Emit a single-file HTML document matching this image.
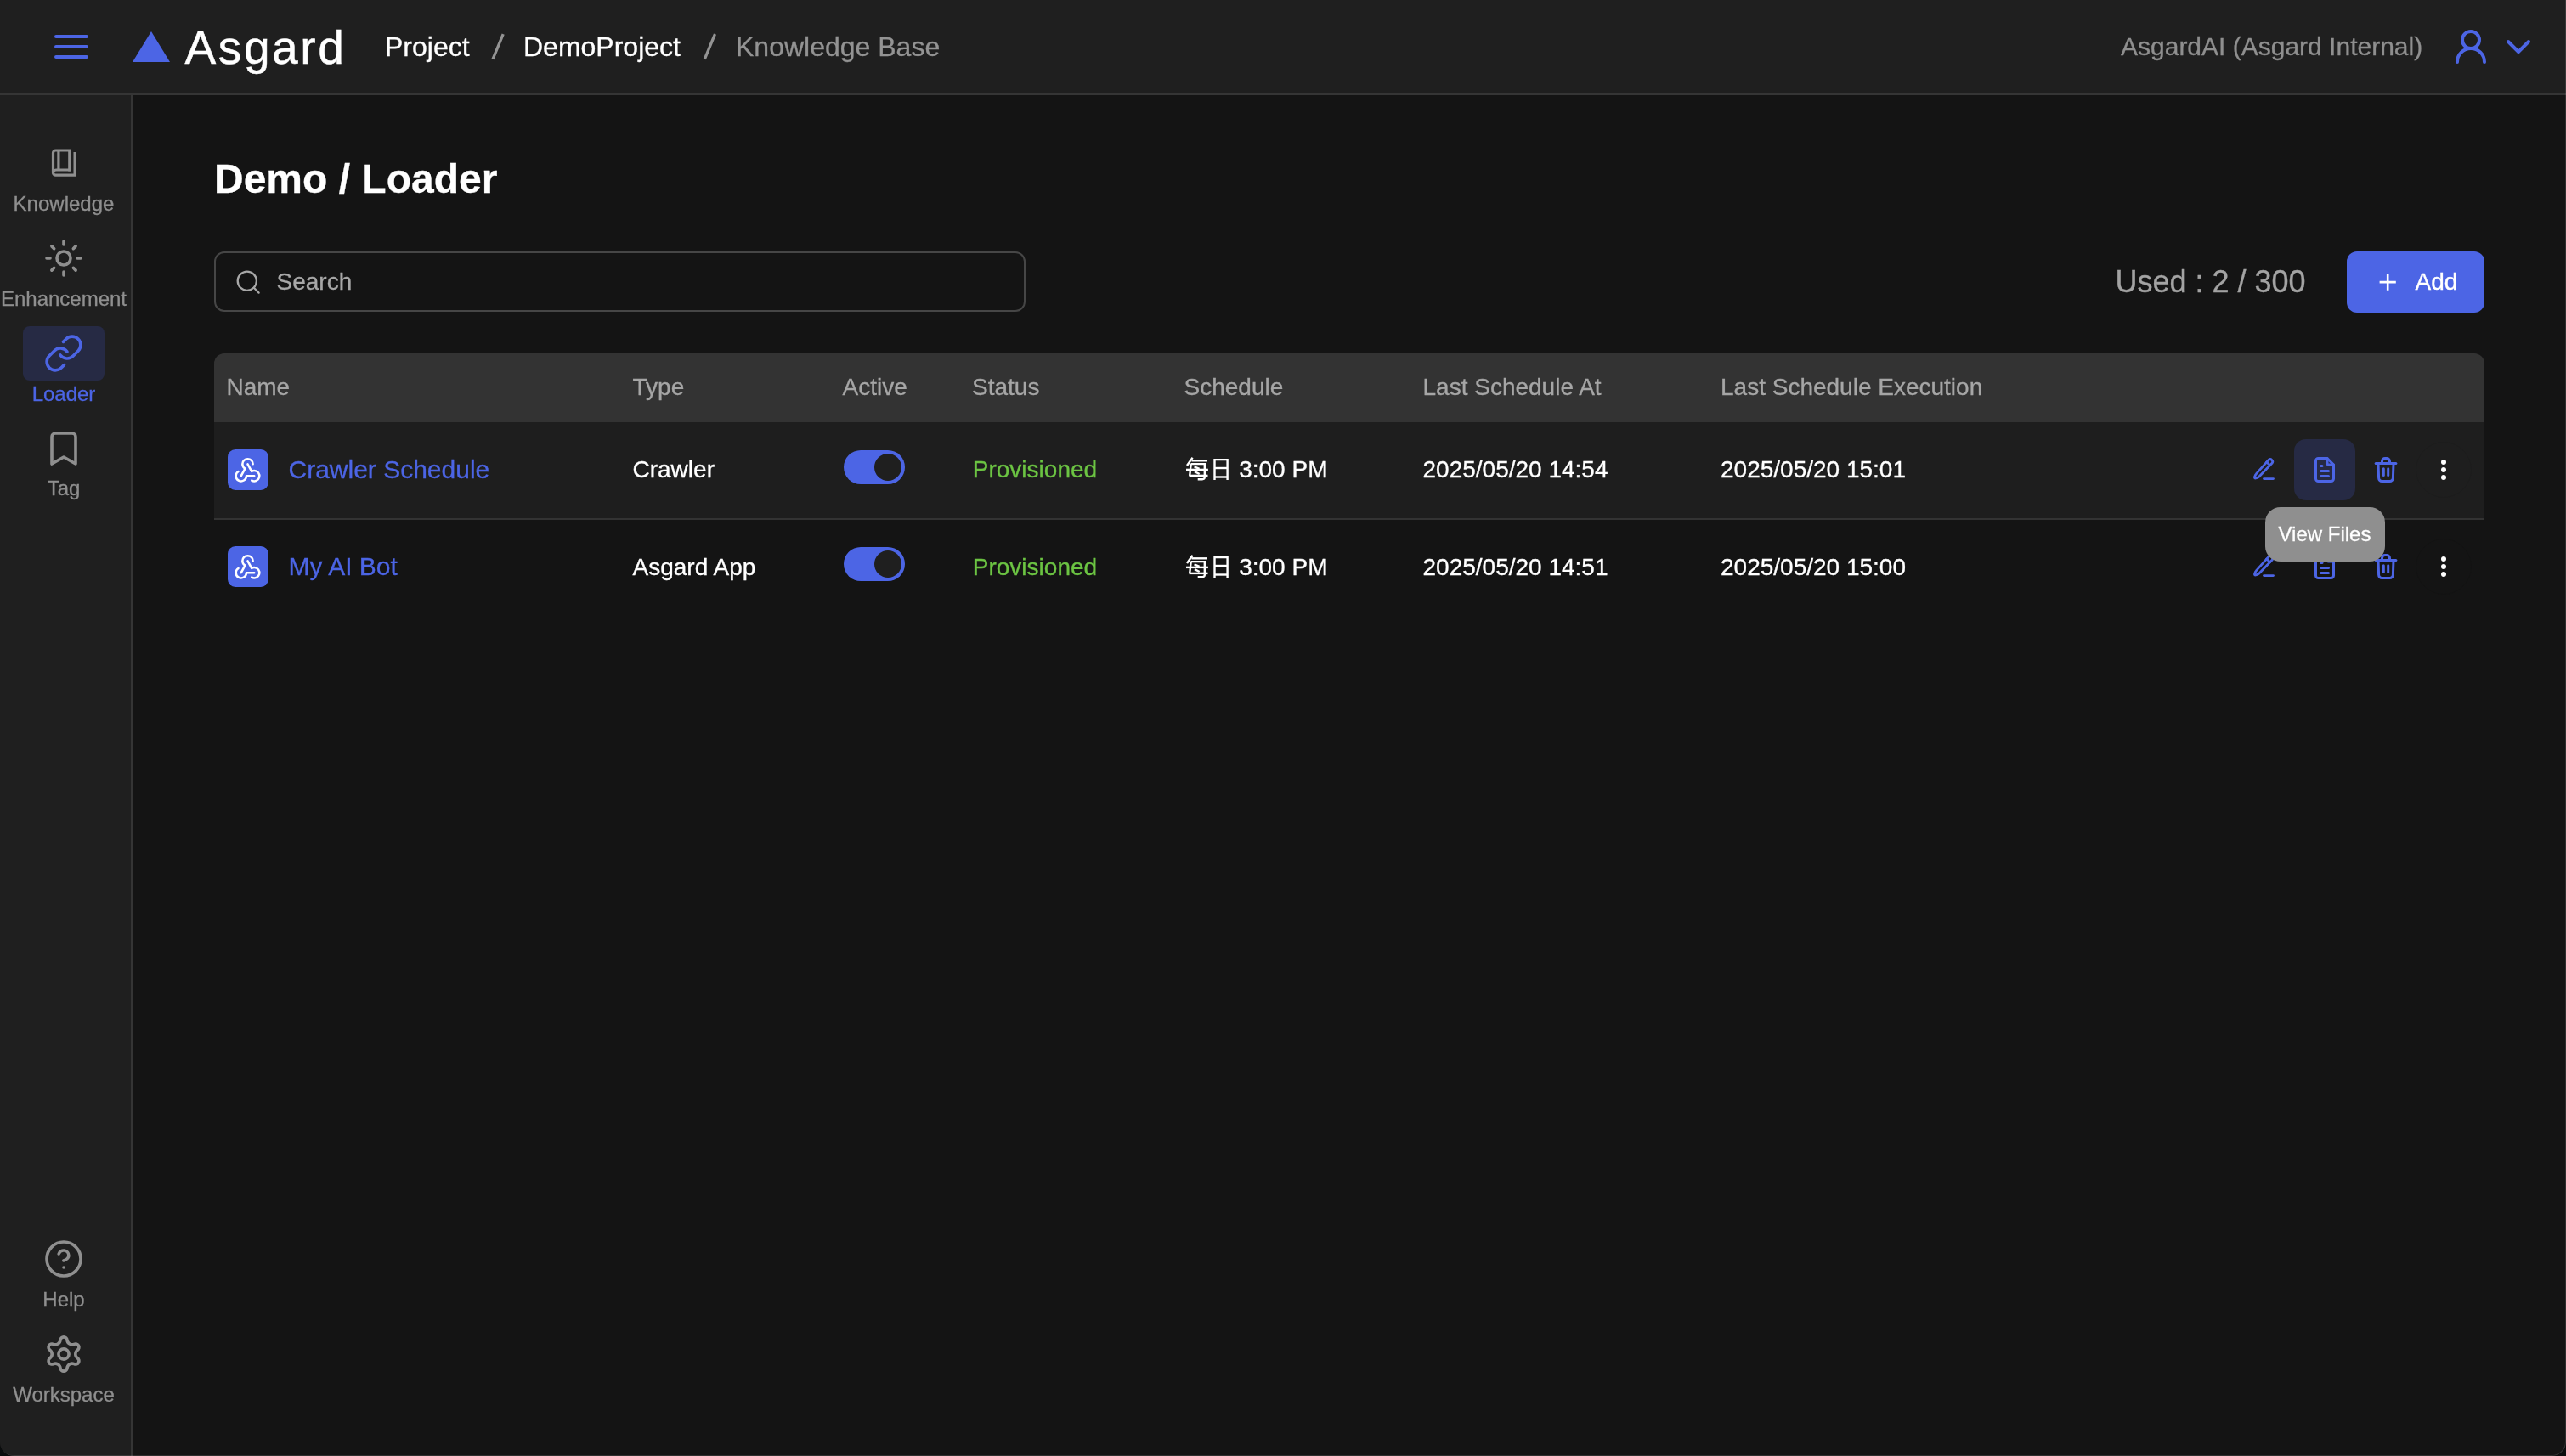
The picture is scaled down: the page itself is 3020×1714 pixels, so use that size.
<!DOCTYPE html>
<html><head><meta charset="utf-8">
<style>
*{margin:0;padding:0;box-sizing:border-box}
html,body{width:3020px;height:1714px;overflow:hidden;background:#0b0d0e}
body{font-family:"Liberation Sans",sans-serif;position:relative}
#win{position:absolute;left:0;top:0;width:3020px;height:1714px;background:#141414;will-change:transform;border-radius:0 0 16px 16px;overflow:hidden}
#frame{position:absolute;left:0;top:0;width:3020px;height:1714px;border-radius:0 0 16px 16px;box-shadow:inset -1px -1px 0 rgba(255,255,255,0.12);pointer-events:none}
.a{position:absolute;white-space:nowrap;line-height:1;-webkit-text-stroke:0.3px currentColor}
svg{position:absolute;overflow:visible}
</style></head>
<body><div id="win">
<div class="a" style="left:0px;top:0px;width:3020px;height:110px;background:#1f1f1f"></div>
<div class="a" style="left:0px;top:110px;width:3020px;height:2px;background:#353535"></div>
<div class="a" style="left:0px;top:112px;width:154px;height:1602px;background:#1f1f1f"></div>
<div class="a" style="left:154px;top:112px;width:2px;height:1602px;background:#353535"></div>
<div class="a" style="left:64px;top:41px;width:40px;height:4px;background:#4c65e5;border-radius:2px"></div>
<div class="a" style="left:64px;top:53px;width:40px;height:4px;background:#4c65e5;border-radius:2px"></div>
<div class="a" style="left:64px;top:65px;width:40px;height:4px;background:#4c65e5;border-radius:2px"></div>
<svg style="left:156px;top:37px" width="44" height="36" viewBox="0 0 44 36" fill="#4c65e5" stroke="none" stroke-width="0" stroke-linecap="round" stroke-linejoin="round" ><polygon points="22,0 44,36 0,36"/></svg>
<div class="a" style="left:217.5px;top:28.84px;font-size:55px;color:#fff;font-weight:normal;letter-spacing:2.6px;-webkit-text-stroke:0.5px #fff">Asgard</div>
<div class="a" style="left:453.0px;top:39.21px;font-size:32px;color:#fff;font-weight:normal;">Project</div>
<svg style="left:570px;top:35px" width="30" height="40" viewBox="570 35 30 40" fill="none" stroke="#939393" stroke-width="3.3" stroke-linejoin="round" stroke-linecap="butt"><path d="M580 69.7L592.2 40.2M829.3 69.7L841.5 40.2"/></svg>
<div class="a" style="left:616.0px;top:39.21px;font-size:32px;color:#fff;font-weight:normal;">DemoProject</div>
<div class="a" style="left:866.0px;top:39.21px;font-size:32px;color:#939393;font-weight:normal;">Knowledge Base</div>
<div class="a" style="left:2496.0px;top:39.61px;font-size:30px;color:#8f8f8f;font-weight:normal;">AsgardAI (Asgard Internal)</div>
<svg style="left:2888px;top:33px" width="40" height="44" viewBox="0 0 40 44" fill="none" stroke="#4c65e5" stroke-width="4" stroke-linecap="round" stroke-linejoin="round" ><circle cx="20" cy="14" r="10"/><path d="M4 40a16 16 0 0 1 32 0"/></svg>
<svg style="left:2948px;top:45px" width="32" height="20" viewBox="0 0 32 20" fill="none" stroke="#4c65e5" stroke-width="4" stroke-linecap="round" stroke-linejoin="round" ><path d="M4 4l12 12l12 -12"/></svg>
<svg style="left:51px;top:168px" width="48" height="48" viewBox="51 168 48 48" fill="none" stroke="#8f8f8f" stroke-width="3.2" stroke-linecap="butt" stroke-linejoin="miter"><path d="M81.8 201.6V177H65.5a3 3 0 0 0 -3 3V203.2a3 3 0 0 0 3 3H88.1V178.9"/><path d="M62.5 204a3.5 3.5 0 0 1 3.5 -4H83.4"/><path d="M68.9 177V200"/></svg>
<div class="a" style="left:0.0px;width:150px;text-align:center;top:228.48px;font-size:24px;color:#8f8f8f;">Knowledge</div>
<svg style="left:51px;top:279.5px" width="48" height="48" viewBox="0 0 24 24" fill="none" stroke="#8f8f8f" stroke-width="1.8" stroke-linecap="round" stroke-linejoin="round" ><circle cx="12" cy="12" r="4"/><path d="M12 2v2"/><path d="M12 20v2"/><path d="m4.93 4.93 1.41 1.41"/><path d="m17.66 17.66 1.41 1.41"/><path d="M2 12h2"/><path d="M20 12h2"/><path d="m6.34 17.66-1.41 1.41"/><path d="m19.07 4.93-1.41 1.41"/></svg>
<div class="a" style="left:0.0px;width:150px;text-align:center;top:340.48px;font-size:24px;color:#8f8f8f;">Enhancement</div>
<div class="a" style="left:27px;top:384px;width:96px;height:64px;background:#262a44;border-radius:8px"></div>
<svg style="left:51px;top:392px" width="48" height="48" viewBox="0 0 24 24" fill="none" stroke="#4c65e5" stroke-width="1.8" stroke-linecap="round" stroke-linejoin="round" ><path d="M10 13a5 5 0 0 0 7.54.54l3-3a5 5 0 0 0-7.07-7.07l-1.72 1.71"/><path d="M14 11a5 5 0 0 0-7.54-.54l-3 3a5 5 0 0 0 7.07 7.07l1.71-1.71"/></svg>
<div class="a" style="left:0.0px;width:150px;text-align:center;top:452.48px;font-size:24px;color:#4c65e5;">Loader</div>
<svg style="left:51px;top:504px" width="48" height="48" viewBox="0 0 24 24" fill="none" stroke="#8f8f8f" stroke-width="1.8" stroke-linecap="round" stroke-linejoin="round" ><path d="m19 21-7-4-7 4V5a2 2 0 0 1 2-2h10a2 2 0 0 1 2 2v16z"/></svg>
<div class="a" style="left:0.0px;width:150px;text-align:center;top:563.48px;font-size:24px;color:#8f8f8f;">Tag</div>
<svg style="left:51px;top:1458px" width="48" height="48" viewBox="0 0 24 24" fill="none" stroke="#8f8f8f" stroke-width="1.8" stroke-linecap="round" stroke-linejoin="round" ><circle cx="12" cy="12" r="10"/><path d="M9.09 9a3 3 0 0 1 5.83 1c0 2-3 3-3 3"/><path d="M12 17h.01"/></svg>
<div class="a" style="left:0.0px;width:150px;text-align:center;top:1518.48px;font-size:24px;color:#8f8f8f;">Help</div>
<svg style="left:51px;top:1570px" width="48" height="48" viewBox="0 0 48 48" fill="none" stroke="#8f8f8f" stroke-width="3.6" stroke-linecap="round" stroke-linejoin="round" ><path d="M20.019 7.514A4.000 4.000 0 0 1 27.981 7.514A5.892 5.892 0 0 0 36.286 12.309A4.000 4.000 0 0 1 40.268 19.205A5.892 5.892 0 0 0 40.268 28.795A4.000 4.000 0 0 1 36.286 35.691A5.892 5.892 0 0 0 27.981 40.486A4.000 4.000 0 0 1 20.019 40.486A5.892 5.892 0 0 0 11.714 35.691A4.000 4.000 0 0 1 7.732 28.795A5.892 5.892 0 0 0 7.732 19.205A4.000 4.000 0 0 1 11.714 12.309A5.892 5.892 0 0 0 20.019 7.514Z"/><circle cx="24" cy="24" r="6.1"/></svg>
<div class="a" style="left:0.0px;width:150px;text-align:center;top:1630.48px;font-size:24px;color:#8f8f8f;">Workspace</div>
<div class="a" style="left:252.0px;top:187.37px;font-size:48px;color:#fff;font-weight:bold;">Demo / Loader</div>
<div class="a" style="left:252px;top:296px;width:955px;height:71px;border:2px solid #464646;border-radius:12px"></div>
<svg style="left:276px;top:316px" width="32" height="32" viewBox="276 316 32 32" fill="none" stroke="#a8a8a8" stroke-width="2.3" stroke-linecap="round" stroke-linejoin="round" ><circle cx="290.8" cy="330.7" r="11.1"/><path d="M299.3 339.3L304.6 344.6"/></svg>
<div class="a" style="left:325.5px;top:317.50px;font-size:28px;color:#a8a8a8;font-weight:normal;">Search</div>
<div class="a" style="left:2489.5px;top:314.03px;font-size:36px;color:#a3a3a3;font-weight:normal;">Used : 2 / 300</div>
<div class="a" style="left:2762px;top:296px;width:162px;height:72px;background:#4c65e5;border-radius:12px"></div>
<svg style="left:2796px;top:318px" width="28" height="28" viewBox="2796 318 28 28" fill="none" stroke="#fff" stroke-width="2.6" stroke-linejoin="round" stroke-linecap="butt"><path d="M2810.2 322.5V341.7M2800.6 332.1H2819.8"/></svg>
<div class="a" style="left:2842.5px;top:317.50px;font-size:28px;color:#fff;font-weight:normal;">Add</div>
<div class="a" style="left:252px;top:416px;width:2672px;height:81px;background:#333;border-radius:12px 12px 0 0"></div>
<div class="a" style="left:252px;top:497px;width:2672px;height:113px;background:#1e1e1e"></div>
<div class="a" style="left:252px;top:610px;width:2672px;height:2px;background:#333"></div>
<div class="a" style="left:266.5px;top:441.60px;font-size:28px;color:#a6a6a6;font-weight:normal;">Name</div>
<div class="a" style="left:744.5px;top:441.60px;font-size:28px;color:#a6a6a6;font-weight:normal;">Type</div>
<div class="a" style="left:991.5px;top:441.60px;font-size:28px;color:#a6a6a6;font-weight:normal;">Active</div>
<div class="a" style="left:1144.0px;top:441.60px;font-size:28px;color:#a6a6a6;font-weight:normal;">Status</div>
<div class="a" style="left:1393.5px;top:441.60px;font-size:28px;color:#a6a6a6;font-weight:normal;">Schedule</div>
<div class="a" style="left:1674.5px;top:441.60px;font-size:28px;color:#a6a6a6;font-weight:normal;">Last Schedule At</div>
<div class="a" style="left:2025.0px;top:441.60px;font-size:28px;color:#a6a6a6;font-weight:normal;">Last Schedule Execution</div>
<div class="a" style="left:268px;top:529px;width:48px;height:48px;background:#4c65e5;border-radius:9px"></div>
<svg style="left:273.4px;top:534.2px" width="37" height="37" viewBox="0 0 24 24" fill="none" stroke="#fff" stroke-width="1.65" stroke-linecap="round" stroke-linejoin="round" ><path d="M4.876 13.61a4 4 0 1 0 6.124 3.39h6"/><path d="M15.066 20.502a4 4 0 1 0 1.934 -7.502c-.706 0 -1.424 .179 -2 .5l-3 -5.5"/><path d="M16 8a4 4 0 1 0 -8 0c0 1.506 .77 2.818 2 3.5l-3 5.5"/></svg>
<div class="a" style="left:339.5px;top:537.61px;font-size:30px;color:#4c65e5;font-weight:normal;">Crawler Schedule</div>
<div class="a" style="left:744.5px;top:539.30px;font-size:28px;color:#fff;font-weight:normal;">Crawler</div>
<div class="a" style="left:993px;top:530px;width:72px;height:40px;background:#4c65e5;border-radius:20px"></div>
<div class="a" style="left:1029px;top:534px;width:32px;height:32px;background:#1f1f1f;border-radius:50%"></div>
<div class="a" style="left:1144.8px;top:539.30px;font-size:28px;color:#6cc443;font-weight:normal;">Provisioned</div>
<svg style="left:1390px;top:533px" width="60" height="36" viewBox="1390 533 60 36" fill="none" stroke="#fff" stroke-width="2.4" stroke-linecap="butt" stroke-linejoin="miter"><path d="M1403.6 538.8L1397 548"/><path d="M1402.5 542.3H1421"/><path d="M1401.5 546.1H1417.8V562Q1417.6 564.2 1415 564.2H1409.7"/><path d="M1401.7 546.1L1400.2 560"/><path d="M1396 552.9H1421.9"/><path d="M1399.5 559.9H1421.5"/><path d="M1405.6 549.4L1411.6 551.9"/><path d="M1406 555.1L1411.7 558"/><path d="M1429.5 565V541.1H1444.6V565"/><path d="M1429.5 551H1444.6"/><path d="M1429.5 561.5H1444.6"/></svg>
<div class="a" style="left:1458.2px;top:539.30px;font-size:28px;color:#fff;font-weight:normal;">3:00 PM</div>
<div class="a" style="left:1674.5px;top:539.30px;font-size:28px;color:#fff;font-weight:normal;">2025/05/20 14:54</div>
<div class="a" style="left:2025.0px;top:539.30px;font-size:28px;color:#fff;font-weight:normal;">2025/05/20 15:01</div>
<svg style="left:2650px;top:539px" width="28" height="28" viewBox="0 0 28 28" fill="none" stroke="#4c65e5" stroke-width="2.8" stroke-linecap="round" stroke-linejoin="round" ><path d="M20.0 2.35A2.8 2.8 0 0 1 24.0 6.25L8.6 22.2Q7.6 23.2 6 23.6L4.6 24A0.9 0.9 0 0 1 3.5 22.9L3.9 21.5Q4.3 19.9 5.3 18.9Z"/><path d="M21.56 8.76L17.56 4.86"/><path d="M14.5 24.6H25.5"/></svg>
<div class="a" style="left:2700px;top:517px;width:72px;height:72px;background:#262a44;border-radius:14px"></div>
<div class="a" style="left:2843px;top:520px;width:66px;height:66px;border:1px solid rgba(0,0,0,0.07);border-radius:50%"></div>
<svg style="left:2718px;top:535px" width="36" height="36" viewBox="0 0 24 24" fill="none" stroke="#4c65e5" stroke-width="2" stroke-linecap="round" stroke-linejoin="round" ><path d="M14 3v4a1 1 0 0 0 1 1h4"/><path d="M17 21h-10a2 2 0 0 1 -2 -2v-14a2 2 0 0 1 2 -2h7l5 5v11a2 2 0 0 1 -2 2z"/><path d="M9 9l1 0"/><path d="M9 13l6 0"/><path d="M9 17l6 0"/></svg>
<svg style="left:2790px;top:535px" width="36" height="36" viewBox="0 0 24 24" fill="none" stroke="#4c65e5" stroke-width="2" stroke-linecap="round" stroke-linejoin="round" ><path d="M4.1 7H19.9"/><path d="M10.2 11.2V16.3"/><path d="M13.8 11.2V16.3"/><path d="M6 7l.4 11.5a2.5 2.5 0 0 0 2.5 2.5h6.2a2.5 2.5 0 0 0 2.5 -2.5L18 7"/><path d="M9 7V5.3a2.3 2.3 0 0 1 2.3 -2.3h1.4a2.3 2.3 0 0 1 2.3 2.3V7"/></svg>
<div class="a" style="left:2873px;top:540.7px;width:6px;height:6px;background:#fff;border-radius:50%"></div>
<div class="a" style="left:2873px;top:550px;width:6px;height:6px;background:#fff;border-radius:50%"></div>
<div class="a" style="left:2873px;top:559.3px;width:6px;height:6px;background:#fff;border-radius:50%"></div>
<div class="a" style="left:2843px;top:634px;width:66px;height:66px;border:1px solid rgba(0,0,0,0.07);border-radius:50%"></div>
<svg style="left:2718px;top:649px" width="36" height="36" viewBox="0 0 24 24" fill="none" stroke="#4c65e5" stroke-width="2" stroke-linecap="round" stroke-linejoin="round" ><path d="M14 3v4a1 1 0 0 0 1 1h4"/><path d="M17 21h-10a2 2 0 0 1 -2 -2v-14a2 2 0 0 1 2 -2h7l5 5v11a2 2 0 0 1 -2 2z"/><path d="M9 9l1 0"/><path d="M9 13l6 0"/><path d="M9 17l6 0"/></svg>
<svg style="left:2790px;top:649px" width="36" height="36" viewBox="0 0 24 24" fill="none" stroke="#4c65e5" stroke-width="2" stroke-linecap="round" stroke-linejoin="round" ><path d="M4.1 7H19.9"/><path d="M10.2 11.2V16.3"/><path d="M13.8 11.2V16.3"/><path d="M6 7l.4 11.5a2.5 2.5 0 0 0 2.5 2.5h6.2a2.5 2.5 0 0 0 2.5 -2.5L18 7"/><path d="M9 7V5.3a2.3 2.3 0 0 1 2.3 -2.3h1.4a2.3 2.3 0 0 1 2.3 2.3V7"/></svg>
<div class="a" style="left:2873px;top:654.7px;width:6px;height:6px;background:#fff;border-radius:50%"></div>
<div class="a" style="left:2873px;top:664px;width:6px;height:6px;background:#fff;border-radius:50%"></div>
<div class="a" style="left:2873px;top:673.3px;width:6px;height:6px;background:#fff;border-radius:50%"></div>
<div class="a" style="left:268px;top:643px;width:48px;height:48px;background:#4c65e5;border-radius:9px"></div>
<svg style="left:273.4px;top:648.2px" width="37" height="37" viewBox="0 0 24 24" fill="none" stroke="#fff" stroke-width="1.65" stroke-linecap="round" stroke-linejoin="round" ><path d="M4.876 13.61a4 4 0 1 0 6.124 3.39h6"/><path d="M15.066 20.502a4 4 0 1 0 1.934 -7.502c-.706 0 -1.424 .179 -2 .5l-3 -5.5"/><path d="M16 8a4 4 0 1 0 -8 0c0 1.506 .77 2.818 2 3.5l-3 5.5"/></svg>
<div class="a" style="left:339.5px;top:652.11px;font-size:30px;color:#4c65e5;font-weight:normal;">My AI Bot</div>
<div class="a" style="left:744.5px;top:653.80px;font-size:28px;color:#fff;font-weight:normal;">Asgard App</div>
<div class="a" style="left:993px;top:644px;width:72px;height:40px;background:#4c65e5;border-radius:20px"></div>
<div class="a" style="left:1029px;top:648px;width:32px;height:32px;background:#1f1f1f;border-radius:50%"></div>
<div class="a" style="left:1144.8px;top:653.80px;font-size:28px;color:#6cc443;font-weight:normal;">Provisioned</div>
<svg style="left:1390px;top:647.5px" width="60" height="36" viewBox="1390 533 60 36" fill="none" stroke="#fff" stroke-width="2.4" stroke-linecap="butt" stroke-linejoin="miter"><path d="M1403.6 538.8L1397 548"/><path d="M1402.5 542.3H1421"/><path d="M1401.5 546.1H1417.8V562Q1417.6 564.2 1415 564.2H1409.7"/><path d="M1401.7 546.1L1400.2 560"/><path d="M1396 552.9H1421.9"/><path d="M1399.5 559.9H1421.5"/><path d="M1405.6 549.4L1411.6 551.9"/><path d="M1406 555.1L1411.7 558"/><path d="M1429.5 565V541.1H1444.6V565"/><path d="M1429.5 551H1444.6"/><path d="M1429.5 561.5H1444.6"/></svg>
<div class="a" style="left:1458.2px;top:653.80px;font-size:28px;color:#fff;font-weight:normal;">3:00 PM</div>
<div class="a" style="left:1674.5px;top:653.80px;font-size:28px;color:#fff;font-weight:normal;">2025/05/20 14:51</div>
<div class="a" style="left:2025.0px;top:653.80px;font-size:28px;color:#fff;font-weight:normal;">2025/05/20 15:00</div>
<svg style="left:2650px;top:653px" width="28" height="28" viewBox="0 0 28 28" fill="none" stroke="#4c65e5" stroke-width="2.8" stroke-linecap="round" stroke-linejoin="round" ><path d="M20.0 2.35A2.8 2.8 0 0 1 24.0 6.25L8.6 22.2Q7.6 23.2 6 23.6L4.6 24A0.9 0.9 0 0 1 3.5 22.9L3.9 21.5Q4.3 19.9 5.3 18.9Z"/><path d="M21.56 8.76L17.56 4.86"/><path d="M14.5 24.6H25.5"/></svg>
<div class="a" style="left:2666px;top:597px;width:141px;height:64px;background:#8f8f8f;border-radius:18px"></div>
<div class="a" style="left:2681.5px;top:616.68px;font-size:24px;color:#fff;font-weight:normal;">View Files</div>
<div id="frame"></div>
</div></body></html>
